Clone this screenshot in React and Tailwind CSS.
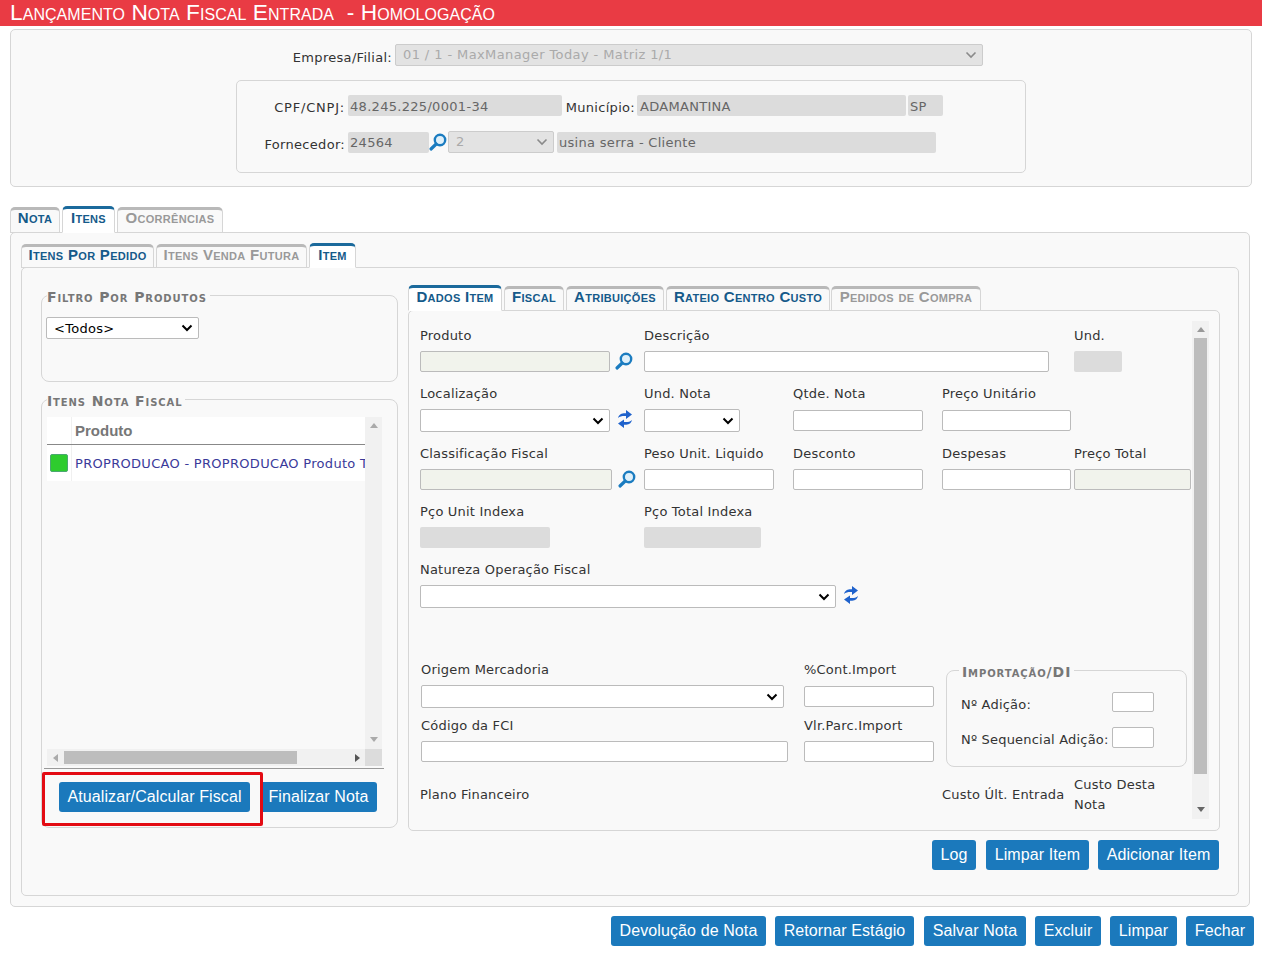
import React from "react";

const FB = "font-['DejaVu_Sans',sans-serif] text-[13px]";
const F = `${FB} tracking-[0.3px]`;
const F2 = `${FB} tracking-[0.2px]`;
const LG = "font-['DejaVu_Sans',sans-serif] font-bold [font-variant:small-caps] text-[14px] tracking-[0.9px] leading-4 text-[#777] relative top-[2px]";

function Search({ className = "" }) {
  return (
    <svg viewBox="0 0 20 20" className={"w-5 h-5 shrink-0 " + className}>
      <circle cx="12" cy="8" r="5.2" fill="#dff0fa" stroke="#1b7cc0" strokeWidth="2.4" />
      <path d="M8.2 12 L3 17" stroke="#1b7cc0" strokeWidth="3.2" strokeLinecap="round" />
    </svg>
  );
}
function Refresh({ className = "" }) {
  return (
    <svg viewBox="0 0 18 20" className={"w-[18px] h-5 shrink-0 " + className}>
      <path d="M2 9 C3 5 6 4 10 4.2 L10 1 L16 5.6 L10 10 L10 7 C7 6.8 4 7 2 9 Z" fill="#1f62cc" />
      <path d="M16 11 C15 15 12 16 8 15.8 L8 19 L2 14.6 L8 10.6 L8 13 C11 13.2 14 13 16 11 Z" fill="#1f62cc" />
    </svg>
  );
}
function Tab({ active, disabled, children, w, main }) {
  const pad = active ? (main ? "pb-[4px]" : "pb-[3px]") : main ? "pb-[5px]" : "pb-[4px]";
  const cls = active
    ? "bg-white border-t-[#1b6a9c] text-[#155a8a] border-b-white"
    : disabled
    ? "mt-px bg-[#f9f9f9] border-t-[#b9b9b9] text-[#999] border-b-[#d6d6d6]"
    : "mt-px bg-[#f9f9f9] border-t-[#b9b9b9] text-[#155a8a] border-b-[#d6d6d6]";
  return (
    <div
      className={`${w} ${cls} ${pad} border border-x-[#d6d6d6] border-t-[3px] rounded-t-[5px] flex items-center justify-center font-['Liberation_Sans',sans-serif] font-bold [font-variant:small-caps] text-[15px] tracking-[0.3px] whitespace-nowrap relative z-10 -mb-px`}
    >
      {children}
    </div>
  );
}
function Btn({ children, className = "" }) {
  return (
    <button className={`h-[30px] rounded-[3px] bg-[#1b79bc] text-white font-['Liberation_Sans',sans-serif] text-[16px] tracking-[0.1px] flex items-center justify-center whitespace-nowrap ${className}`}>
      {children}
    </button>
  );
}
function Sel({ w, h = "h-[23px]", className = "", disabled, children, textClass = "" }) {
  const color = disabled ? "#8a8a8a" : "#000";
  return (
    <div className={`relative shrink-0 ${w} ${h} ${className}`}>
      <select
        disabled={disabled}
        className={`appearance-none block w-full h-full border rounded-[2px] outline-none pl-[7px] ${disabled ? "bg-[#e3e3e3] border-[#ccc] text-[#aaa]" : "bg-white border-[#bbb] text-black"} ${textClass}`}
      >
        {children || <option></option>}
      </select>
      <svg viewBox="0 0 12 8" className="absolute right-[6px] top-1/2 -translate-y-1/2 w-3 h-2 pointer-events-none">
        <path d="M1.5 1.5 L6 6 L10.5 1.5" fill="none" stroke={color} strokeWidth={disabled ? 1.6 : 2} />
      </svg>
    </div>
  );
}
const inp = "block bg-white border border-[#bbb] rounded-[2px] outline-none";
const h21 = "h-[21px]";
const green = "block h-[21px] bg-[#f1f3ec] border border-[#bbb] rounded-[2px] outline-none";
const gray = "block h-[21px] bg-[#dcdcdc] rounded-[2px] outline-none";
const ro = `h-[21px] bg-[#dcdcdc] rounded-[2px] text-[#666] flex items-center shrink-0 ${F}`;
const cols = "grid grid-cols-[224px_149px_149px_132px_117px]";

function Lbl({ children, className = "" }) {
  return <div className={`h-5 leading-[22px] text-[#333] whitespace-nowrap ${F2} ${className}`}>{children}</div>;
}
function Up({ color = "#999" }) {
  return <svg viewBox="0 0 8 5" className="w-2 h-[5px]"><path d="M0 5 L4 0 L8 5Z" fill={color} /></svg>;
}
function Down({ color = "#999" }) {
  return <svg viewBox="0 0 8 5" className="w-2 h-[5px]"><path d="M0 0 L4 5 L8 0Z" fill={color} /></svg>;
}

export default function App() {
  return (
    <div className="w-[1262px] h-[959px] bg-white overflow-hidden">
      <div className="h-[26px] bg-[#e93b44] text-white pl-[10px] font-['Liberation_Sans',sans-serif] [font-variant:small-caps] text-[22.7px] tracking-[0.05px] leading-[24px] whitespace-pre">
        Lançamento Nota Fiscal Entrada{"  "}- Homologação
      </div>

      <div className="mt-[3px] ml-[10px] w-[1242px] h-[158px] border border-[#d6d6d6] rounded-[5px] bg-[#f9f9f9] pt-[14px]">
        <div className="flex items-center h-[22px]">
          <div className={`w-[381px] text-right text-[#333] pt-[6px] ${F}`}>Empresa/Filial:</div>
          <Sel disabled w="w-[588px]" h="h-[22px]" className="ml-[3px]" textClass={`${FB} tracking-[0.4px]`}>
            <option>01 / 1 - MaxManager Today - Matriz 1/1</option>
          </Sel>
        </div>
        <div className="mt-[14px] ml-[225px] w-[790px] h-[93px] border border-[#d6d6d6] rounded-[5px] pt-[14px]">
          <div className="flex items-center h-[21px]">
            <div className={`w-[108px] text-right text-[#333] pt-[5px] ${FB} tracking-[0.8px]`}>CPF/CNPJ:</div>
            <div className={`ml-[3px] w-[214px] pl-[2px] pt-[2px] ${ro}`}>48.245.225/0001-34</div>
            <div className={`w-[75px] text-right text-[#333] pt-[5px] pr-[2px] ${F}`}>Município:</div>
            <div className={`w-[269px] pl-[3px] pt-[2px] ${ro}`}>ADAMANTINA</div>
            <div className={`ml-[2px] w-[35px] pl-[2px] pt-[2px] ${ro}`}>SP</div>
          </div>
          <div className="flex items-center mt-[15px] h-[22px]">
            <div className={`w-[108px] text-right text-[#333] pt-[6px] ${F}`}>Fornecedor:</div>
            <div className={`ml-[3px] w-[81px] pl-[2px] pt-px ${ro}`}>24564</div>
            <Search className="ml-[-1px] -mt-[1px]" />
            <Sel disabled w="w-[106px]" h="h-[22px]" textClass={F}>
              <option>2</option>
            </Sel>
            <div className={`ml-[3px] w-[379px] pl-[2px] pt-px ${ro}`}>usina serra - Cliente</div>
          </div>
        </div>
      </div>

      <div className="mt-[19px] ml-[10px] flex h-[26px]">
        <Tab w="w-[50px]" main>Nota</Tab>
        <div className="w-[2px]" />
        <Tab w="w-[53px]" active main>Itens</Tab>
        <div className="w-[2px]" />
        <Tab w="w-[106px]" disabled main>Ocorrências</Tab>
      </div>

      <div className="ml-[10px] w-[1240px] h-[675px] border border-[#d6d6d6] rounded-[5px] bg-[#f9f9f9] pt-[10px] pl-[10px]">
        <div className="flex h-[24px]">
          <Tab w="w-[133px]">Itens Por Pedido</Tab>
          <div className="w-[2px]" />
          <Tab w="w-[151px]" disabled>Itens Venda Futura</Tab>
          <div className="w-[2px]" />
          <Tab w="w-[47px]" active>Item</Tab>
        </div>
        <div className="w-[1218px] h-[629px] border border-[#d6d6d6] rounded-[5px] flex pl-[19px]">
          {/* left column */}
          <div className="w-[357px] pt-[19px]">
            <fieldset className="h-[95px] border border-[#d6d6d6] rounded-[8px] px-0 pb-0">
              <legend className={`ml-[5px] pr-[3px] ${LG}`}>Filtro Por Produtos</legend>
              <Sel w="w-[153px]" h="h-[22px]" className="mt-[14px] ml-[4px]" textClass={`${F} pt-px`}>
                <option>&lt;Todos&gt;</option>
              </Sel>
            </fieldset>
            <fieldset className="mt-[9px] h-[437px] border border-[#d6d6d6] rounded-[8px]">
              <legend className={`ml-[5px] pr-[3px] ${LG}`}>Itens Nota Fiscal</legend>
              <div className="mt-[10px] ml-[5px] w-[335px] h-[349px] flex flex-col">
                <div className="flex flex-1 min-h-0">
                  <div className="w-[318px] overflow-hidden">
                    <div className="h-[28px] bg-white flex border-b border-[#888]">
                      <div className="w-[25px] shrink-0 border-r border-[#f0f0f0]" />
                      <div className="pl-[3px] font-['Liberation_Sans',sans-serif] font-bold text-[15px] leading-[27px] text-[#777]">Produto</div>
                    </div>
                    <div className="h-[36px] bg-white flex items-center">
                      <div className="w-[25px] shrink-0 h-full border-r border-[#f0f0f0] flex items-center justify-center">
                        <div className="w-[18px] h-[18px] bg-[#2ecc2e] border border-[#4aa870] rounded-[2px]" />
                      </div>
                      <div className={`pl-[3px] pt-px whitespace-nowrap text-[#3a3a9a] ${F}`}>PROPRODUCAO - PROPRODUCAO Produto Teste</div>
                    </div>
                  </div>
                  <div className="w-[17px] bg-[#f1f1f1] flex flex-col items-center justify-between pt-[6px] pb-[7px]">
                    <Up color="#aaa" />
                    <Down color="#aaa" />
                  </div>
                </div>
                <div className="h-[17px] flex">
                  <div className="w-[318px] bg-[#f1f1f1] flex items-center">
                    <div className="w-[17px] flex justify-center">
                      <svg viewBox="0 0 5 8" className="w-[5px] h-2"><path d="M5 0 L0 4 L5 8Z" fill="#aaa" /></svg>
                    </div>
                    <div className="w-[233px] h-[13px] bg-[#bdbdbd]" />
                    <div className="flex-1 flex justify-end pr-[5px]">
                      <svg viewBox="0 0 5 8" className="w-[5px] h-2"><path d="M0 0 L5 4 L0 8Z" fill="#555" /></svg>
                    </div>
                  </div>
                  <div className="w-[17px] bg-[#dcdcdc]" />
                </div>
              </div>
              <div className="mt-[2px] ml-[2px] w-[340px] h-px bg-[#999]" />
              <div className="mt-[13px] relative flex pl-[17px]">
                <Btn className="w-[191px]">Atualizar/Calcular Fiscal</Btn>
                <Btn className="ml-[10px] w-[117px]">Finalizar Nota</Btn>
                <div className="absolute left-0 -top-[10px] w-[221px] h-[54px] border-[3px] border-[#e30b13] rounded-[2px]" />
              </div>
            </fieldset>
          </div>

          {/* right column */}
          <div className="ml-[10px] w-[812px] pt-[17px]">
            <div className="flex h-[25px]">
              <Tab w="w-[94px]" active>Dados Item</Tab>
              <div className="w-[2px]" />
              <Tab w="w-[60px]">Fiscal</Tab>
              <div className="w-[2px]" />
              <Tab w="w-[98px]">Atribuições</Tab>
              <div className="w-[2px]" />
              <Tab w="w-[164px]">Rateio Centro Custo</Tab>
              <div className="w-px" />
              <Tab w="w-[150px]" disabled>Pedidos de Compra</Tab>
            </div>
            <div className="h-[521px] border border-[#d6d6d6] rounded-[5px] flex">
              <div className="w-[783px] pt-[14px] pl-[11px]">
                <div className={`${cols} h-[58px]`}>
                  <div>
                    <Lbl>Produto</Lbl>
                    <div className="flex items-center mt-[6px]">
                      <input className={`${green} w-[190px]`} />
                      <Search className="ml-[4px] -mt-[2px]" />
                    </div>
                  </div>
                  <div className="col-span-3">
                    <Lbl>Descrição</Lbl>
                    <input className={`${inp} ${h21} mt-[6px] w-[405px]`} />
                  </div>
                  <div>
                    <Lbl>Und.</Lbl>
                    <input className={`${gray} mt-[6px] w-[48px]`} />
                  </div>
                </div>
                <div className={`${cols} h-[60px]`}>
                  <div>
                    <Lbl>Localização</Lbl>
                    <div className="flex items-center mt-[6px]">
                      <Sel w="w-[190px]" />
                      <Refresh className="ml-[6px] -mt-[3px]" />
                    </div>
                  </div>
                  <div>
                    <Lbl>Und. Nota</Lbl>
                    <Sel w="w-[96px]" className="mt-[6px]" />
                  </div>
                  <div>
                    <Lbl>Qtde. Nota</Lbl>
                    <input className={`${inp} ${h21} mt-[7px] w-[130px]`} />
                  </div>
                  <div>
                    <Lbl>Preço Unitário</Lbl>
                    <input className={`${inp} ${h21} mt-[7px] w-[129px]`} />
                  </div>
                </div>
                <div className={`${cols} h-[58px]`}>
                  <div>
                    <Lbl>Classificação Fiscal</Lbl>
                    <div className="flex items-center mt-[6px]">
                      <input className={`${green} w-[192px]`} />
                      <Search className="ml-[5px] -mt-[2px]" />
                    </div>
                  </div>
                  <div>
                    <Lbl>Peso Unit. Liquido</Lbl>
                    <input className={`${inp} ${h21} mt-[6px] w-[130px]`} />
                  </div>
                  <div>
                    <Lbl>Desconto</Lbl>
                    <input className={`${inp} ${h21} mt-[6px] w-[130px]`} />
                  </div>
                  <div>
                    <Lbl>Despesas</Lbl>
                    <input className={`${inp} ${h21} mt-[6px] w-[129px]`} />
                  </div>
                  <div>
                    <Lbl>Preço Total</Lbl>
                    <input className={`${green} mt-[6px] w-[117px]`} />
                  </div>
                </div>
                <div className={`${cols} h-[58px]`}>
                  <div>
                    <Lbl>Pço Unit Indexa</Lbl>
                    <input className={`${gray} mt-[6px] w-[130px]`} />
                  </div>
                  <div>
                    <Lbl>Pço Total Indexa</Lbl>
                    <input className={`${gray} mt-[6px] w-[117px]`} />
                  </div>
                </div>
                <div className="h-[100px]">
                  <Lbl>Natureza Operação Fiscal</Lbl>
                  <div className="flex items-center mt-[6px]">
                    <Sel w="w-[416px]" />
                    <Refresh className="ml-[6px] -mt-[4px]" />
                  </div>
                </div>
                <div className="flex h-[116px] pl-px">
                  <div className="grid grid-cols-[383px_130px] auto-rows-[56px] w-[513px]">
                    <div>
                      <Lbl>Origem Mercadoria</Lbl>
                      <Sel w="w-[363px]" className="mt-[6px]" />
                    </div>
                    <div>
                      <Lbl>%Cont.Import</Lbl>
                      <input className={`${inp} ${h21} mt-[7px] w-[130px]`} />
                    </div>
                    <div>
                      <Lbl>Código da FCI</Lbl>
                      <input className={`${inp} ${h21} mt-[6px] w-[367px]`} />
                    </div>
                    <div>
                      <Lbl>Vlr.Parc.Import</Lbl>
                      <input className={`${inp} ${h21} mt-[6px] w-[130px]`} />
                    </div>
                  </div>
                  <fieldset className="ml-[12px] mt-[3px] w-[241px] h-[105px] border border-[#d6d6d6] rounded-[8px]">
                    <legend className={`ml-[12px] px-[3px] ${LG}`}>Importação/DI</legend>
                    <div className="flex items-center mt-[14px] h-[20px] pl-[14px]">
                      <div className={`w-[151px] text-[#333] pt-[6px] ${F2}`}>Nº Adição:</div>
                      <input className={`${inp} w-[42px] h-[20px]`} />
                    </div>
                    <div className="flex items-center mt-[15px] h-[21px] pl-[14px]">
                      <div className={`w-[151px] text-[#333] whitespace-nowrap pt-[5px] ${F2}`}>Nº Sequencial Adição:</div>
                      <input className={`${inp} ${h21} w-[42px]`} />
                    </div>
                  </fieldset>
                </div>
                <div className={`${cols} h-[40px] items-start`}>
                  <Lbl className="mt-[9px]">Plano Financeiro</Lbl>
                  <div />
                  <div />
                  <Lbl className="mt-[9px]">Custo Últ. Entrada</Lbl>
                  <div className={`leading-5 text-[#333] ${F2}`}>Custo Desta Nota</div>
                </div>
              </div>
              <div className="mt-[10px] w-[17px] h-[498px] bg-[#f1f1f1] flex flex-col items-center">
                <div className="h-[17px] flex items-center"><Up /></div>
                <div className="w-[13px] h-[436px] bg-[#bdbdbd]" />
                <div className="flex-1 flex items-end pb-[7px]"><Down color="#666" /></div>
              </div>
            </div>
            <div className="mt-[9px] flex justify-end pr-px">
              <Btn className="w-[44px]">Log</Btn>
              <Btn className="ml-[10px] w-[103px]">Limpar Item</Btn>
              <Btn className="ml-[9px] w-[121px]">Adicionar Item</Btn>
            </div>
          </div>
        </div>
      </div>

      <div className="mt-[9px] flex justify-end pr-[8px]">
        <Btn className="w-[155px]">Devolução de Nota</Btn>
        <Btn className="ml-[9px] w-[139px]">Retornar Estágio</Btn>
        <Btn className="ml-[10px] w-[102px]">Salvar Nota</Btn>
        <Btn className="ml-[9px] w-[66px]">Excluir</Btn>
        <Btn className="ml-[9px] w-[67px]">Limpar</Btn>
        <Btn className="ml-[9px] w-[68px]">Fechar</Btn>
      </div>
    </div>
  );
}
